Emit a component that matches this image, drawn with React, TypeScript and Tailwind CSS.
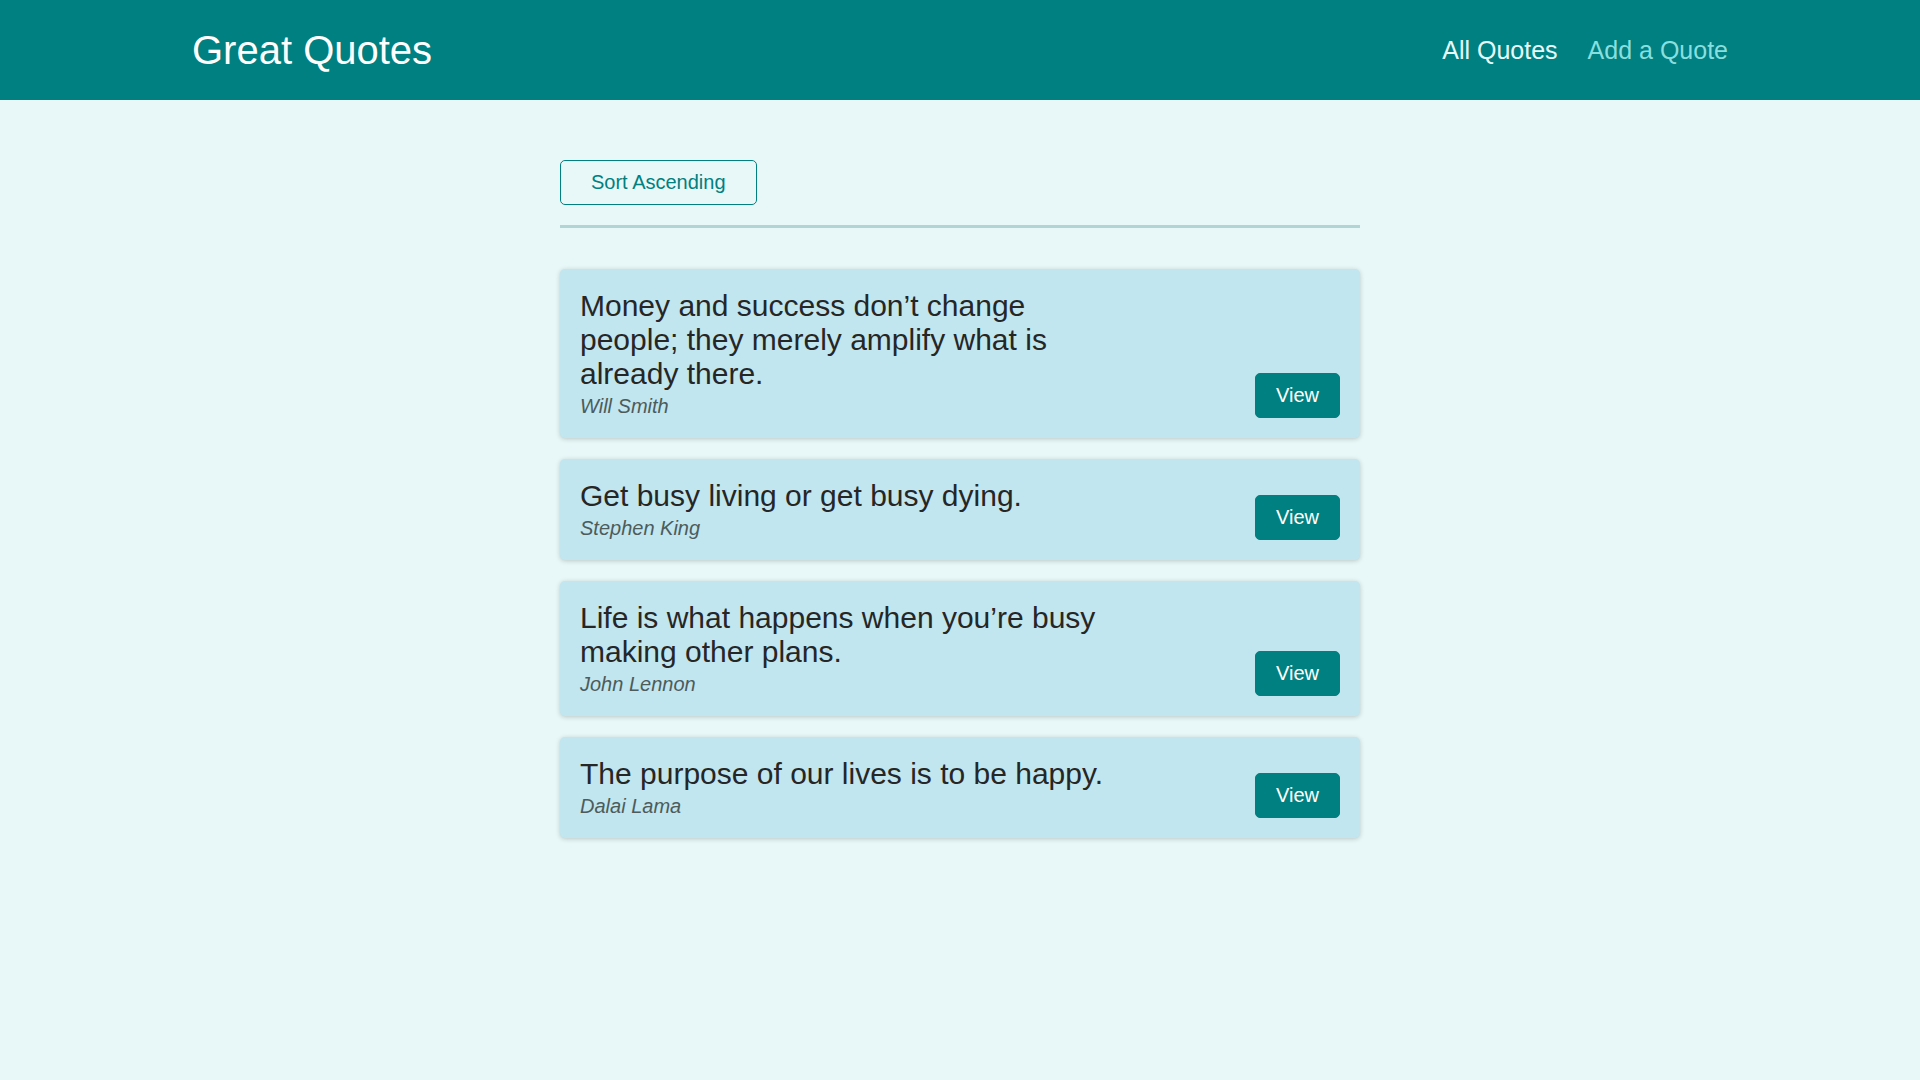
const QUOTES = [
  { id: "q1", text: "Money and success don’t change people; they merely amplify what is already there.", author: "Will Smith" },
  { id: "q2", text: "Get busy living or get busy dying.", author: "Stephen King" },
  { id: "q3", text: "Life is what happens when you’re busy making other plans.", author: "John Lennon" },
  { id: "q4", text: "The purpose of our lives is to be happy.", author: "Dalai Lama" },
];

function QuoteItem({ text, author }: { text: string; author: string }) {
  return (
    <li className="flex items-end justify-between rounded-[5px] bg-[#c1e6ef] p-5 shadow-[0_1px_5px_rgba(0,0,0,0.2)]">
      <figure>
        <blockquote>
          <p className="max-w-[540px] text-[30px] leading-[normal] text-[#262626]">{text}</p>
        </blockquote>
        <figcaption className="mt-1 text-[20px] italic leading-[normal] text-[#4d5b5b]">{author}</figcaption>
      </figure>
      <button className="shrink-0 cursor-pointer rounded-[5px] border border-[#008080] bg-[#008080] px-5 py-[10px] text-[20px] leading-[normal] text-white">
        View
      </button>
    </li>
  );
}

export default function App() {
  return (
    <div className="min-h-screen bg-[#e8f8f8] font-['Liberation_Sans',Arial,sans-serif]">
      {/* header */}
      <header className="flex h-[100px] w-full items-center justify-between bg-[#008080] px-[10%]">
        <div className="text-[40px] leading-[normal] text-white">Great Quotes</div>
        <nav>
          <ul className="flex items-center gap-[30px] text-[25px] leading-[normal]">
            <li><a className="text-[#e6fcfc]">All Quotes</a></li>
            <li><a className="text-[#88dfdf]">Add a Quote</a></li>
          </ul>
        </nav>
      </header>

      <main className="mx-auto my-[60px] w-[90%] max-w-[800px]">
        <div className="mb-[41px] border-b-[3px] border-[#b3d4d4] pb-5">
          <button className="cursor-pointer rounded-[5px] border border-[#008080] bg-transparent px-[30px] py-[10px] text-[20px] leading-[normal] text-[#008080]">
            Sort Ascending
          </button>
        </div>
        <ul className="flex flex-col gap-[21px]">
          {QUOTES.map((q) => (
            <QuoteItem key={q.id} text={q.text} author={q.author} />
          ))}
        </ul>
      </main>
    </div>
  );
}
